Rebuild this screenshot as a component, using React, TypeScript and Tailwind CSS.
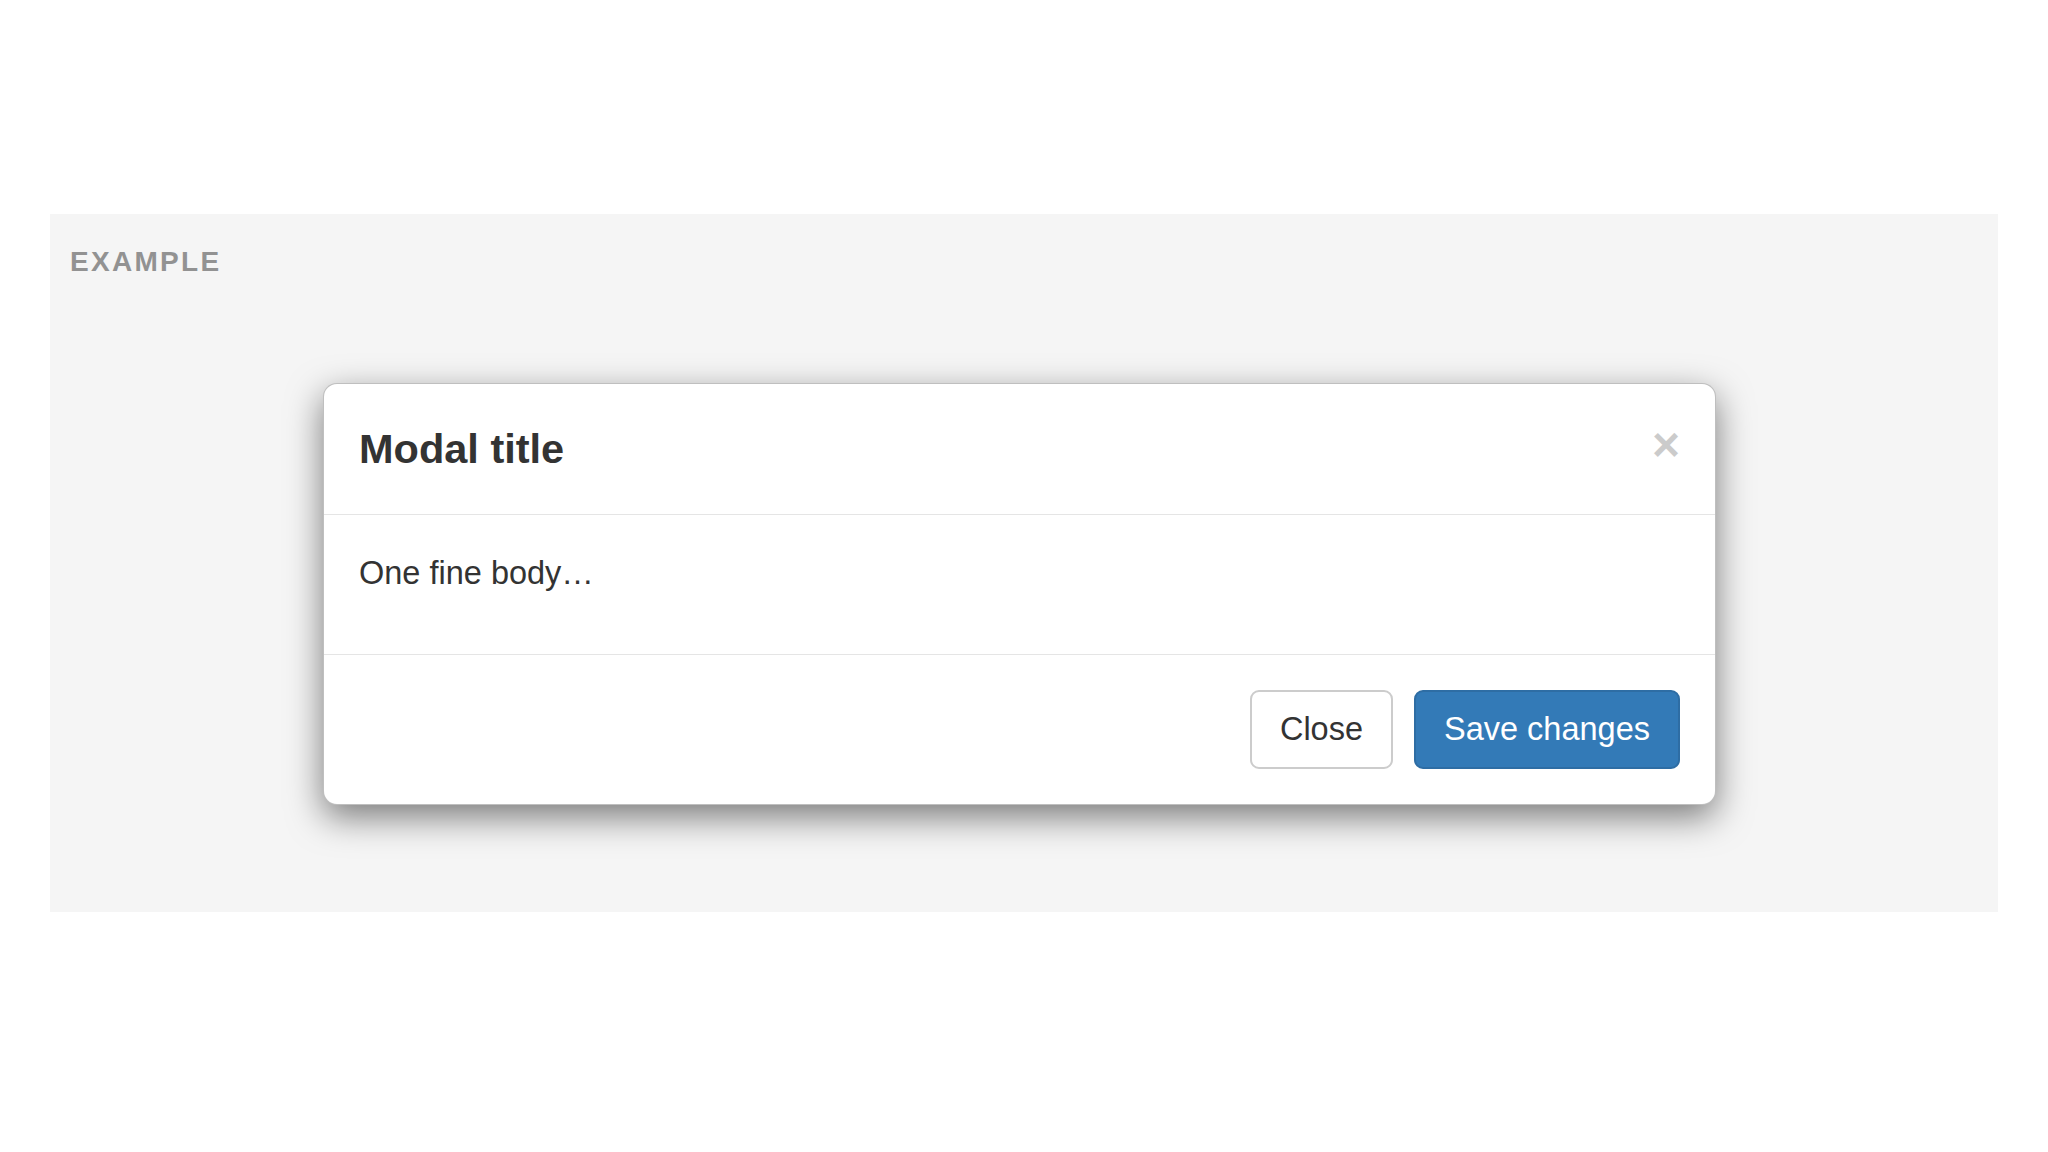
export default function App() {
  return (
    <div className="min-h-[1152px] w-[2048px] bg-white pt-[214px] font-['Liberation_Sans',Arial,sans-serif] text-[#333]">
      <div className="ml-[50px] w-[1948px] bg-[#f5f5f5] pb-[107px] pl-[20px] pt-[34px]">
        <div className="text-[28px] font-bold uppercase leading-[28px] tracking-[2.3px] text-[#929292]">
          Example
        </div>

        <div className="ml-[253px] mt-[107px] w-[1393px] rounded-[14px] border border-[rgba(0,0,0,0.25)] bg-white shadow-[0_12px_35px_rgba(0,0,0,0.5)]">
          {/* header */}
          <div className="flex items-start justify-between border-b border-[#e5e5e5] p-[35px]">
            <h4 className="text-[41.5px] font-bold leading-[60px] text-[#333]">Modal title</h4>
            <button
              type="button"
              className="mt-[2px] text-[48px] font-bold leading-none text-black opacity-20 [text-shadow:0_2px_0_#fff]"
            >
              ×
            </button>
          </div>

          {/* body */}
          <div className="p-[35px]">
            <p className="mb-[23px] text-[32.5px] leading-[46.4px]">One fine body…</p>
          </div>

          {/* footer */}
          <div className="flex justify-end gap-[21px] border-t border-[#e5e5e5] p-[35px]">
            <button
              type="button"
              className="rounded-[9px] border-2 border-[#ccc] bg-white px-[28px] py-[14px] text-[32.5px] leading-[46.4px] text-[#333]"
            >
              Close
            </button>
            <button
              type="button"
              className="rounded-[9px] border-2 border-[#2e6da4] bg-[#337ab7] px-[28px] py-[14px] text-[32.5px] leading-[46.4px] text-white"
            >
              Save changes
            </button>
          </div>
        </div>
      </div>
    </div>
  );
}
